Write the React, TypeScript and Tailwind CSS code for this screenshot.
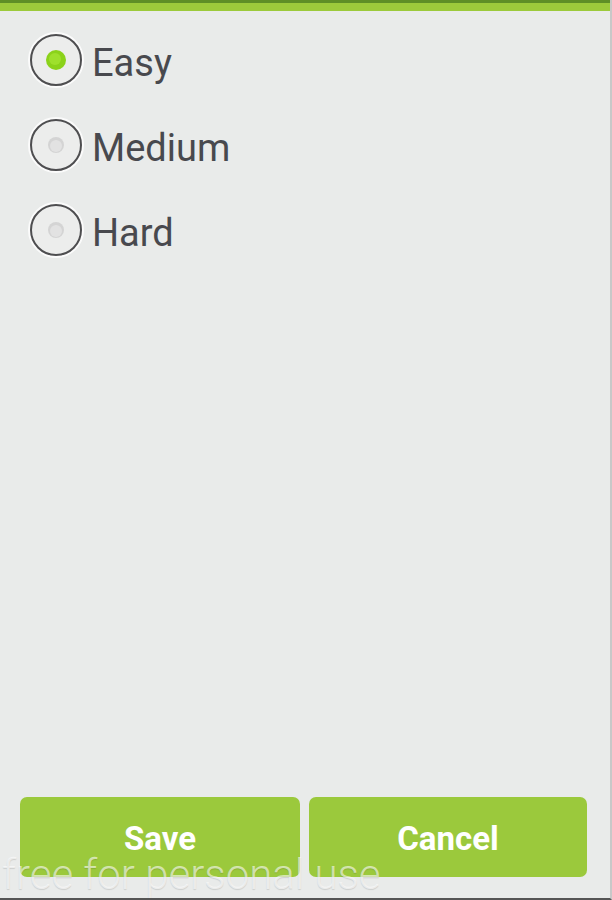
import React from "react";

function Radio({ checked }: { checked: boolean }) {
  return (
    <svg width="56" height="56" viewBox="0 0 56 56" className="shrink-0">
      <circle cx="28" cy="28" r="26" fill="none" stroke="#ffffff" strokeWidth="4" opacity="0.8" />
      <circle cx="28" cy="28" r="25" fill="#ecedec" stroke="#4e4e50" strokeWidth="2" />
      {checked ? (
        <>
          <circle cx="28" cy="28" r="10" fill="#8bd21a" />
          <circle cx="27" cy="27" r="6" fill="#9ee02c" />
        </>
      ) : (
        <>
          <circle cx="28" cy="28" r="8" fill="#d4d4d4" />
          <circle cx="28" cy="29" r="6" fill="#e2e2e2" />
        </>
      )}
    </svg>
  );
}

export default function App() {
  const items = [
    { label: "Easy", checked: true },
    { label: "Medium", checked: false },
    { label: "Hard", checked: false },
  ];
  return (
    <div
      className="relative w-[612px] h-[900px] bg-[#e9ebea] flex flex-col overflow-hidden border-r-2 border-b-2 border-r-[#c8c8c8] border-b-[#555555]"
      style={{ fontFamily: "Roboto, 'Liberation Sans', sans-serif" }}
    >
      <div className="h-[3px] bg-[#5e8f26]" />
      <div className="h-[8px] bg-[#9cca3b]" />
      <div className="flex flex-col pl-[28px] pt-[21px] gap-[29px]">
        {items.map((it) => (
          <div key={it.label} className="flex items-center gap-[8px] h-[56px]">
            <Radio checked={it.checked} />
            <span className="text-[38px] text-[#48494e] leading-none pt-[5px]">{it.label}</span>
          </div>
        ))}
      </div>
      <div className="flex-1" />
      <div className="flex gap-[9px] pl-[20px] pr-[23px] pb-[21px]">
        <button className="w-[280px] h-[80px] rounded-[7px] bg-[#9bc93c] text-white font-bold text-[33px] pt-[3px]">
          Save
        </button>
        <button className="flex-1 h-[80px] rounded-[7px] bg-[#9bc93c] text-white font-bold text-[33px] pt-[3px]">
          Cancel
        </button>
      </div>
      <div
        className="absolute left-[2px] bottom-[2px] text-[42px] font-light text-white/60 leading-none whitespace-nowrap"
        style={{ textShadow: "0 1px 1px rgba(0,0,0,0.12)" }}
      >
        free for personal use
      </div>
    </div>
  );
}
